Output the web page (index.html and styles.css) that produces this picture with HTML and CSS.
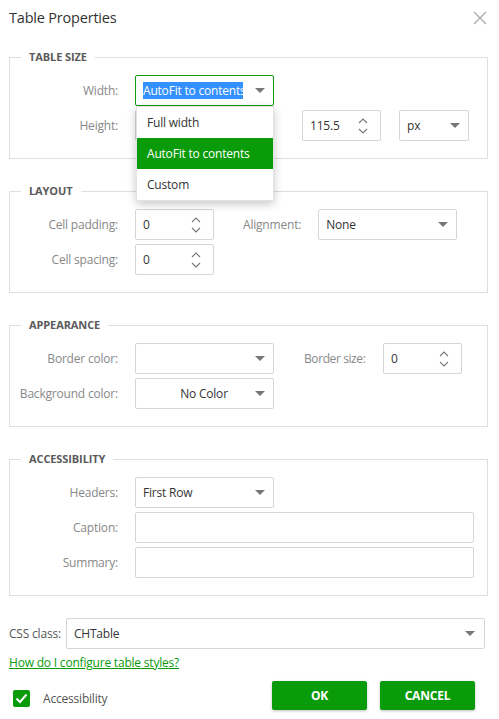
FILE: index.html
```html
<!DOCTYPE html>
<html>
<head>
<meta charset="utf-8">
<link rel="stylesheet" href="styles.css">
</head>
<body>
<div class="dialog">
  <div class="header">
    <span class="title">Table Properties</span>
    <svg class="close" width="14" height="14" viewBox="0 0 14 14"><path d="M1 1L13 13M13 1L1 13" stroke="#a8a8a8" stroke-width="1.2" fill="none"/></svg>
  </div>

  <fieldset class="group">
    <legend>TABLE SIZE</legend>
    <div class="row">
      <label class="lbl">Width:</label>
      <div class="anchor">
        <div class="select w139 focused"><span class="sel-text"><span class="hl">AutoFit to contents</span></span><span class="caret"></span></div>
        <ul class="popup">
          <li>Full width</li>
          <li class="active">AutoFit to contents</li>
          <li>Custom</li>
        </ul>
      </div>
    </div>
    <div class="row">
      <label class="lbl">Height:</label>
      <div class="select w139"><span class="sel-text"></span><span class="caret"></span></div>
      <div class="spin w79 ml28"><span class="val">115.5</span><span class="arrows"><svg width="10" height="20" viewBox="0 0 10 20"><path d="M1 7L5 3L9 7M1 13L5 17L9 13" stroke="#777" stroke-width="1.1" fill="none"/></svg></span></div>
      <div class="select w70 ml18"><span class="sel-text">px</span><span class="caret"></span></div>
    </div>
  </fieldset>

  <fieldset class="group">
    <legend>LAYOUT</legend>
    <div class="row">
      <label class="lbl">Cell padding:</label>
      <div class="spin w79"><span class="val">0</span><span class="arrows"><svg width="10" height="20" viewBox="0 0 10 20"><path d="M1 7L5 3L9 7M1 13L5 17L9 13" stroke="#777" stroke-width="1.1" fill="none"/></svg></span></div>
      <label class="lbl2 ml29">Alignment:</label>
      <div class="select w139"><span class="sel-text">None</span><span class="caret"></span></div>
    </div>
    <div class="row">
      <label class="lbl">Cell spacing:</label>
      <div class="spin w79"><span class="val">0</span><span class="arrows"><svg width="10" height="20" viewBox="0 0 10 20"><path d="M1 7L5 3L9 7M1 13L5 17L9 13" stroke="#777" stroke-width="1.1" fill="none"/></svg></span></div>
    </div>
  </fieldset>

  <fieldset class="group">
    <legend>APPEARANCE</legend>
    <div class="row">
      <label class="lbl">Border color:</label>
      <div class="select w139"><span class="sel-text"></span><span class="caret"></span></div>
      <label class="lbl2 bsize">Border size:</label>
      <div class="spin w79"><span class="val">0</span><span class="arrows"><svg width="10" height="20" viewBox="0 0 10 20"><path d="M1 7L5 3L9 7M1 13L5 17L9 13" stroke="#777" stroke-width="1.1" fill="none"/></svg></span></div>
    </div>
    <div class="row">
      <label class="lbl">Background color:</label>
      <div class="select w139"><span class="sel-text center">No Color</span><span class="caret"></span></div>
    </div>
  </fieldset>

  <fieldset class="group">
    <legend>ACCESSIBILITY</legend>
    <div class="row">
      <label class="lbl">Headers:</label>
      <div class="select w139"><span class="sel-text">First Row</span><span class="caret"></span></div>
    </div>
    <div class="row">
      <label class="lbl">Caption:</label>
      <div class="text w339"></div>
    </div>
    <div class="row">
      <label class="lbl">Summary:</label>
      <div class="text w339"></div>
    </div>
  </fieldset>

  <div class="css-row">
    <label class="css-lbl">CSS class:</label>
    <div class="select grow"><span class="sel-text">CHTable</span><span class="caret"></span></div>
  </div>
  <a class="help" href="#">How do I configure table styles?</a>

  <div class="footer">
    <div class="check">
      <span class="box"><svg width="17" height="17" viewBox="0 0 17 17"><path d="M3.5 8.5L7 12L13.5 4.5" stroke="#fff" stroke-width="2" fill="none"/></svg></span>
      <span class="check-lbl">Accessibility</span>
    </div>
    <div class="buttons">
      <button class="btn">OK</button>
      <button class="btn">CANCEL</button>
    </div>
  </div>
</div>
</body>
</html>
```

FILE: styles.css
```css
* { box-sizing: border-box; }
html, body { margin: 0; padding: 0; background: #fff; }
body {
  font-family: "Open Sans", "Noto Sans", sans-serif;
  font-size: 12px;
  color: #333;
  width: 499px;
  height: 719px;
  overflow: hidden;
}
.dialog { padding: 0 11px 0 9px; }
.header {
  height: 49px;
  display: flex;
  justify-content: space-between;
  align-items: flex-start;
  padding-top: 7px;
}
.title { font-size: 14.5px; line-height: 22px; color: #333; letter-spacing: -0.2px; }
.close { margin-top: 4px; margin-right: 1px; }

.group {
  border: 1px solid #dedede;
  margin: 0 0 24px 0;
  padding: 10px 0 17px 0;
  display: flex;
  flex-direction: column;
  gap: 4px;
  min-width: 0;
}
.group legend {
  margin-left: 11px;
  padding: 0 8px;
  font-weight: 700;
  font-size: 11px;
  line-height: 16px;
  color: #5a5a5a;
  letter-spacing: -0.1px;
}
.row { display: flex; align-items: center; height: 31px; }
.lbl {
  width: 108px;
  text-align: right;
  color: #888;
  margin-right: 17px;
  white-space: nowrap;
  letter-spacing: -0.2px;
}
.lbl2 { color: #888; margin-right: 17px; white-space: nowrap; letter-spacing: -0.2px; }
.bsize { margin-left: 30px; width: 62px; letter-spacing: -0.4px; }
.ml28 { margin-left: 28px; }
.ml18 { margin-left: 18px; }
.ml29 { margin-left: 29px; }

.w139 { width: 139px; }
.w79 { width: 79px; }
.w70 { width: 70px; }
.w339 { width: 339px; }

.select, .spin, .text {
  height: 31px;
  border: 1px solid #d6d6d6;
  border-radius: 2px;
  background: #fff;
  display: flex;
  align-items: center;
  position: relative;
}
.select { padding: 0 8px 0 7px; }
.select.focused { border-color: #109a10; }
.sel-text {
  flex: 1;
  overflow: hidden;
  white-space: nowrap;
  color: #333;
  letter-spacing: -0.2px;
}
.sel-text.center { text-align: center; padding-left: 10px; }
.focused .sel-text { flex: 0 0 100px; width: 100px; }
.hl { background: #3390ff; color: #fff; padding: 1px 0; }
.caret {
  width: 0; height: 0;
  border-left: 5px solid transparent;
  border-right: 5px solid transparent;
  border-top: 5px solid #777;
  margin-left: auto;
}
.spin { padding: 0 0 0 7px; }
.val { flex: 1; letter-spacing: -0.2px; }
.arrows { width: 10px; height: 20px; margin-right: 12px; display: flex; }

.anchor { position: relative; }
.popup {
  position: absolute;
  top: 31px;
  left: 1px;
  width: 138px;
  margin: 0;
  padding: 0;
  list-style: none;
  background: #fff;
  border: 1px solid #e2e2e2;
  box-shadow: 0 3px 9px rgba(0,0,0,0.22);
  z-index: 5;
}
.popup li {
  height: 31px;
  line-height: 31px;
  padding-left: 10px;
  color: #333;
  letter-spacing: -0.2px;
}
.popup li.active { background: #0a9b0a; color: #fff; }

.css-row {
  display: flex;
  align-items: center;
  margin-top: -2px;
  padding-right: 3px;
}
.css-lbl { color: #555; margin-right: 5px; letter-spacing: -0.2px; }
.select.grow { flex: 1; height: 31px; padding-right: 9px; }
.help {
  display: inline-block;
  margin-top: 5px;
  color: #0a9b0a;
  text-decoration: underline;
  letter-spacing: -0.2px;
}
.footer {
  display: flex;
  justify-content: space-between;
  align-items: center;
  margin-top: 10px;
  padding-right: 13px;
}
.check { display: flex; align-items: center; padding-left: 4px; padding-top: 6px; }
.box {
  width: 17px; height: 17px;
  background: #0a9b0a;
  border-radius: 2px;
  display: flex;
}
.check-lbl { margin-left: 13px; color: #555; letter-spacing: -0.2px; }
.buttons { display: flex; gap: 13px; }
.btn {
  width: 95px;
  height: 29px;
  border: none;
  border-radius: 2px;
  background: #0a9b0a;
  color: #fff;
  font-family: "Open Sans", "Noto Sans", sans-serif;
  font-weight: 700;
  font-size: 12px;
  box-shadow: 0 1px 3px rgba(0,0,0,0.25);
  letter-spacing: -0.2px;
}
```
